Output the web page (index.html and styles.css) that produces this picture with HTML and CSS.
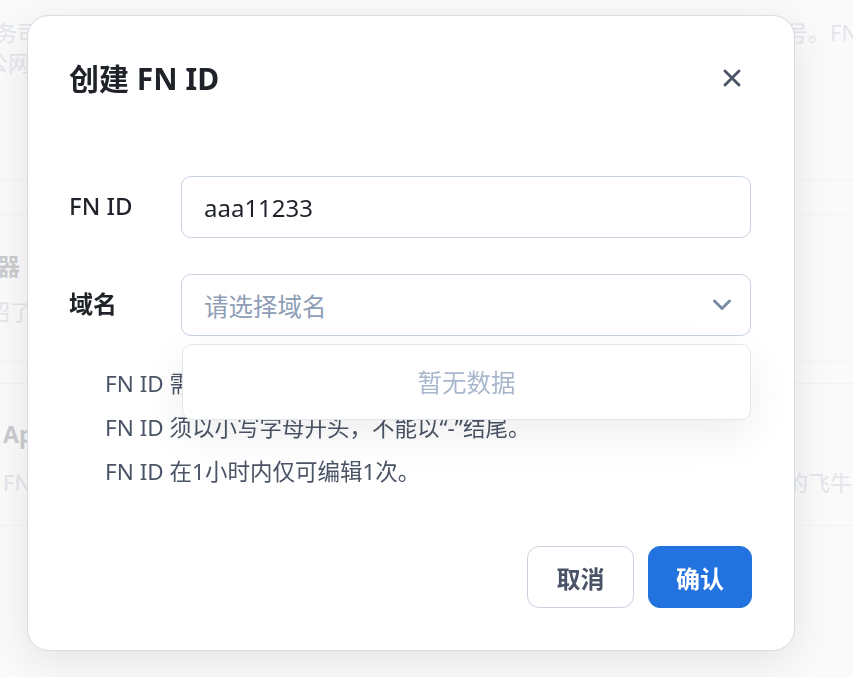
FILE: index.html
```html
<!DOCTYPE html>
<html lang="zh-CN">
<head>
<meta charset="utf-8">
<title>创建 FN ID</title>
<link rel="stylesheet" href="styles.css">
</head>
<body>
<div class="page">
  <section class="bg-block bg-first">
    <div class="bg-line"><span class="frag-l shift-5">务司</span><span class="frag-r">号。FN ID</span></div>
    <div class="bg-line"><span class="frag-l shift-14">公网</span></div>
  </section>
  <div class="bg-sep bg-sep-a"></div>
  <section class="bg-block bg-second">
    <div class="bg-line bg-title"><span class="frag-l shift-3">器</span></div>
    <div class="bg-line bg-desc"><span class="frag-l shift-12">绍了</span></div>
  </section>
  <div class="bg-sep bg-sep-b"></div>
  <section class="bg-block bg-third">
    <div class="bg-line bg-title"><span class="frag-l push-3">App</span></div>
    <div class="bg-line bg-desc2"><span class="frag-l push-3">FN ID</span><span class="frag-r">的飞牛</span></div>
  </section>
</div>

<div class="overlay">
  <div class="modal" role="dialog" aria-label="创建 FN ID">
    <header class="modal-head">
      <h2 class="modal-title">创建 FN ID</h2>
      <button class="close-btn" type="button" aria-label="关闭">
        <svg width="20" height="20" viewBox="0 0 20 20"><path d="M3 3 L17 17 M17 3 L3 17" stroke="#4a5466" stroke-width="2.8" stroke-linecap="round" fill="none"/></svg>
      </button>
    </header>
    <div class="modal-body">
      <div class="field">
        <label class="field-label">FN ID</label>
        <div class="text-input">aaa11233</div>
      </div>
      <div class="field field-second">
        <label class="field-label label-bold">域名</label>
        <div class="select-wrap">
          <div class="select-box">
            <span class="placeholder">请选择域名</span>
            <svg class="chevron" width="20" height="12" viewBox="0 0 20 12"><polyline points="2.5,2 10,9.5 17.5,2" stroke="#7c8ca4" stroke-width="3" stroke-linecap="round" stroke-linejoin="round" fill="none"/></svg>
          </div>
          <div class="dropdown">暂无数据</div>
        </div>
      </div>
      <ul class="hints">
        <li>FN ID 需由4-20位小写字母、数字或“-”组成。</li>
        <li>FN ID 须以小写字母开头，不能以“-”结尾。</li>
        <li>FN ID 在1小时内仅可编辑1次。</li>
      </ul>
    </div>
    <footer class="modal-foot">
      <button class="btn btn-cancel" type="button">取消</button>
      <button class="btn btn-primary" type="button">确认</button>
    </footer>
  </div>
</div>
</body>
</html>
```
FILE: styles.css
```css
* { box-sizing: border-box; }

html, body {
  margin: 0;
  padding: 0;
  width: 853px;
  height: 677px;
  overflow: hidden;
  background: #fafafa;
  font-family: "Noto Sans", "Noto Sans CJK SC", sans-serif;
}

/* background page */
.page {
  width: 853px;
  font-size: 22px;
  line-height: 30px;
  color: #d6dae1;
}

.bg-block { display: flex; flex-direction: column; }
.bg-first { padding-top: 17px; height: 179px; }
.bg-second { padding-top: 36px; height: 146px; }
.bg-third { padding-top: 35px; height: 142px; border-bottom: 1px solid #efeff2; }

.bg-sep { border-top: 1px solid #efeff2; border-bottom: 1px solid #efeff2; }
.bg-sep-a { height: 36px; }
.bg-sep-b { height: 23px; }

.bg-line {
  display: flex;
  justify-content: space-between;
  white-space: nowrap;
  height: 30px;
}
.bg-title { font-weight: 700; color: #b2b3b6; font-size: 23px; }
.bg-desc { margin-top: 15px; }
.bg-desc2 { margin-top: 18px; }

.frag-l { white-space: nowrap; }
.frag-r { flex: 0 0 67px; overflow: hidden; white-space: nowrap; }
.shift-5 { margin-left: -5px; }
.shift-14 { margin-left: -14px; }
.shift-3 { margin-left: -3px; }
.shift-12 { margin-left: -12px; }
.push-3 { margin-left: 3px; }

/* overlay + modal */
.overlay {
  position: fixed;
  inset: 0;
  display: flex;
  align-items: flex-start;
  padding: 15px 0 0 27px;
  background: rgba(250, 250, 251, 0.35);
}

.modal {
  width: 768px;
  height: 636px;
  background: #ffffff;
  border: 1px solid #d8dbe0;
  border-radius: 22px;
  box-shadow: 0 10px 40px rgba(0, 0, 0, 0.09);
  display: flex;
  flex-direction: column;
}

.modal-head {
  display: flex;
  align-items: center;
  justify-content: space-between;
  padding: 43px 52px 0 41px;
}

.modal-title {
  margin: 0;
  font-size: 30px;
  line-height: 40px;
  font-weight: 700;
  color: #1f2329;
}

.close-btn {
  width: 20px;
  height: 20px;
  padding: 0;
  border: 0;
  background: transparent;
  display: flex;
  margin-top: -2px;
}

.modal-body {
  padding: 0 43px 0 41px;
  margin-top: 77px;
}

.field {
  display: flex;
  align-items: center;
}
.field-second { margin-top: 36px; }

.field-label {
  flex: 0 0 112px;
  font-size: 24px;
  line-height: 32px;
  font-weight: 500;
  color: #1f2329;
  margin-top: -3px;
}
.label-bold { font-weight: 700; }

.text-input,
.select-box {
  flex: 1;
  height: 62px;
  border: 1px solid #c7d2df;
  border-radius: 10px;
  padding: 0 18px 0 22px;
  display: flex;
  align-items: center;
  font-size: 24px;
  color: #1f2329;
  background: #fff;
}

.select-wrap {
  flex: 1;
  position: relative;
  display: flex;
}

.select-box { justify-content: space-between; }
.placeholder { color: #8e9eb6; font-size: 24.5px; }
.chevron { display: block; }

.dropdown {
  position: absolute;
  top: calc(100% + 8px);
  left: 1px;
  right: 0;
  height: 76px;
  padding-bottom: 2px;
  background: #fff;
  border: 1px solid #e3e6ea;
  border-radius: 10px;
  box-shadow: 0 14px 44px rgba(0, 0, 0, 0.07);
  display: flex;
  align-items: center;
  justify-content: center;
  font-size: 24.5px;
  color: #a8b7cb;
  z-index: 2;
}

.hints {
  list-style: none;
  margin: 26px 0 0;
  padding: 0 0 0 36px;
  font-size: 22.5px;
  line-height: 44px;
  color: #4a5466;
}

.modal-foot {
  margin-top: auto;
  display: flex;
  justify-content: flex-end;
  gap: 14px;
  padding: 0 42px 42px 0;
}

.btn {
  height: 62px;
  border-radius: 12px;
  font-family: "Noto Sans", "Noto Sans CJK SC", sans-serif;
  font-size: 24px;
  font-weight: 700;
  border: 1px solid transparent;
}
.btn-cancel {
  padding: 0 28.5px;
  background: #fff;
  border-color: #c9d3df;
  color: #4a5466;
}
.btn-primary {
  padding: 0 27px;
  background: #2273df;
  border-color: #2273df;
  color: #fff;
}
```
